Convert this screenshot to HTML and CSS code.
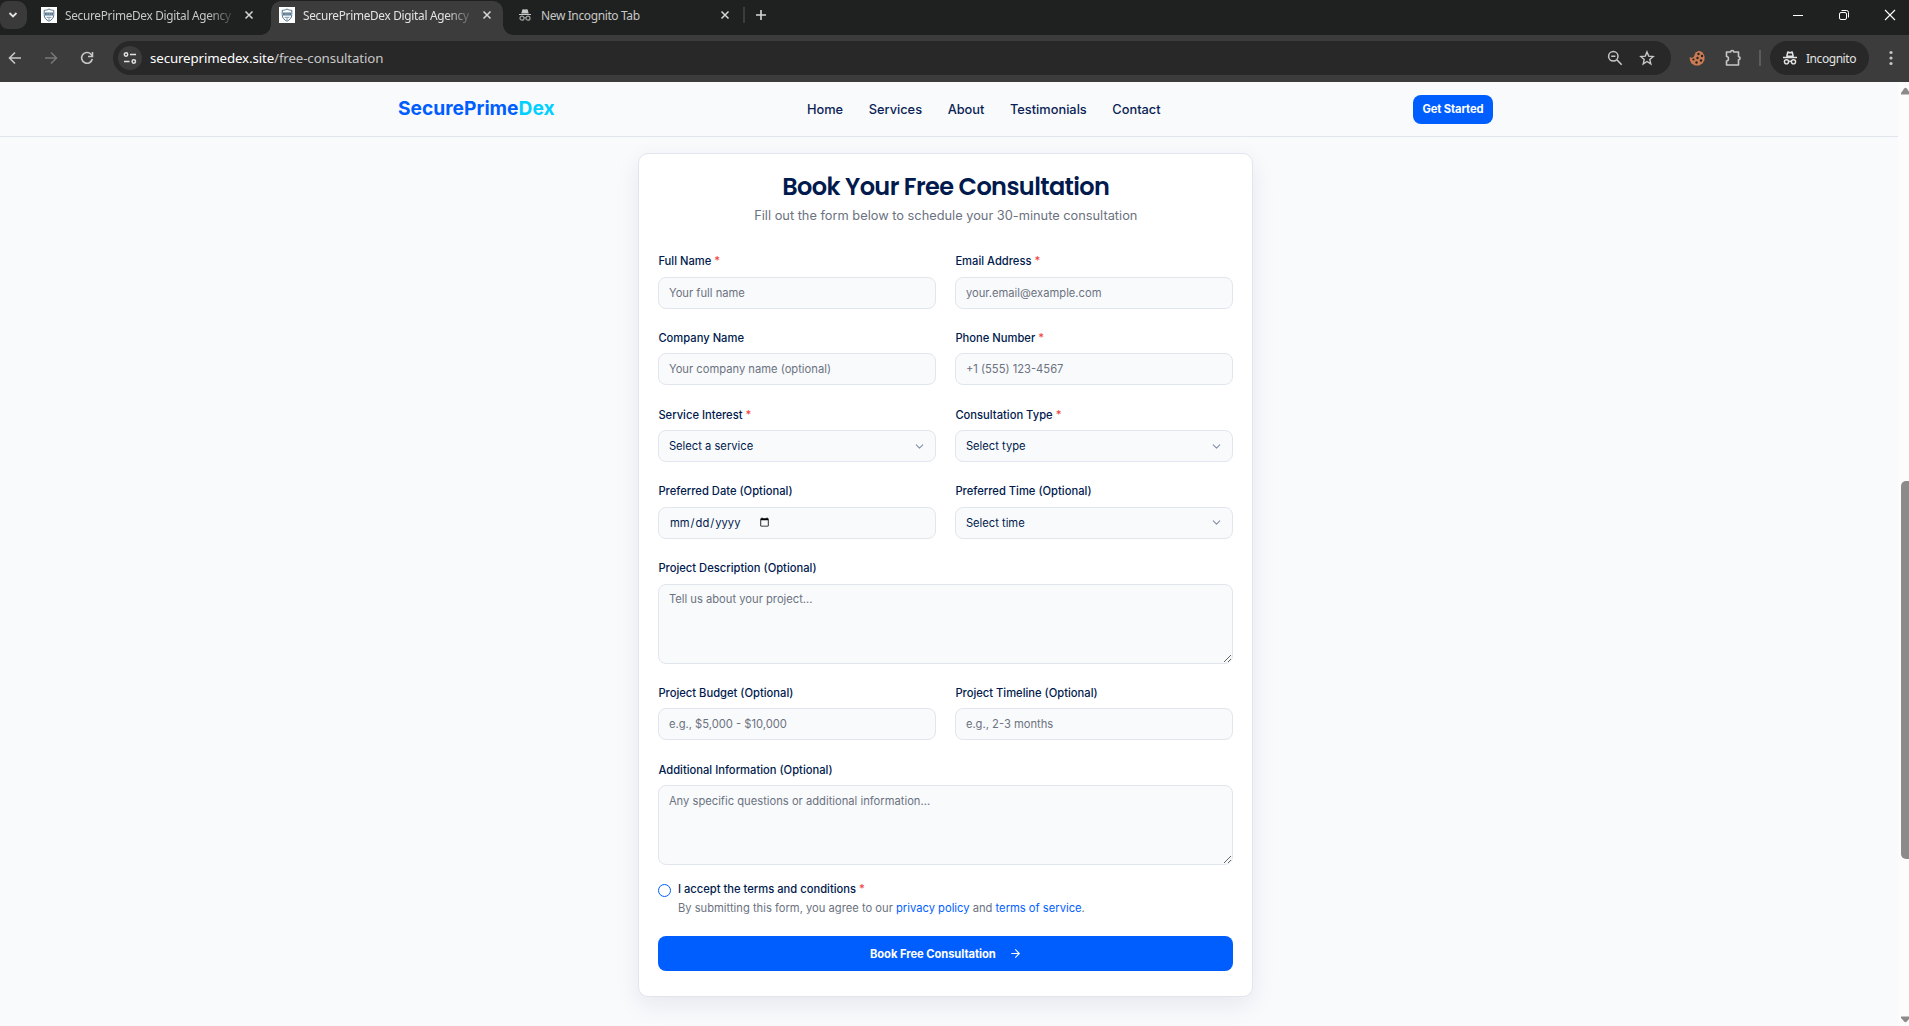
FILE: index.html
```html
<!DOCTYPE html>
<html lang="en">
<head>
<meta charset="utf-8">
<title>SecurePrimeDex Digital Agency</title>
<link rel="stylesheet" href="styles.css">
</head>
<body>
<svg class="defs" width="0" height="0">
  <symbol id="i-x" viewBox="0 0 10 10"><path d="M1.5 1.5l7 7M8.500 1.500l-7 7" fill="none" stroke="currentColor" stroke-width="1.500"/></symbol>
  <symbol id="i-shield" viewBox="0 0 16 16"><rect width="16" height="16" fill="#fff"/><path d="M8 2c-1.600 1-3 1.300-4.800 1.300v4.400C3.200 11 5.300 13 8 14.200 10.700 13 12.800 11 12.800 7.700V3.300C11 3.300 9.600 3 8 2z" fill="none" stroke="#54748c" stroke-width="1"/><path d="M4 5.500h8v3H4z" fill="#54748c"/><path d="M5.500 7h1.200M7.500 7h1.200M9.500 7h1.200" stroke="#cfd9e0" stroke-width=".8"/><path d="M5.500 10.300h5M7 12h2" stroke="#7b94a7" stroke-width="1"/></symbol>
  <symbol id="i-spy" viewBox="0 0 16 16"><path d="M4.800 6.200l1-4.200 2.200.7 2.200-.7 1 4.200z" fill="none" stroke="currentColor" stroke-width="1.500" stroke-linejoin="round"/><path d="M1 7.500h14" stroke="currentColor" stroke-width="1.500"/><circle cx="4.500" cy="11.800" r="2.100" fill="none" stroke="currentColor" stroke-width="1.400"/><circle cx="11.500" cy="11.800" r="2.100" fill="none" stroke="currentColor" stroke-width="1.400"/><path d="M6.600 11.600q1.400-1 2.800 0" fill="none" stroke="currentColor" stroke-width="1.300"/></symbol>
  <symbol id="i-chev" viewBox="0 0 24 24"><path d="m6 9 6 6 6-6" fill="none" stroke="currentColor" stroke-width="2" stroke-linecap="round" stroke-linejoin="round"/></symbol>
</svg>

<div class="chrome">
  <div class="tabstrip">
    <div class="tab-search"><svg width="10" height="8" viewBox="0 0 10 8"><path d="M1.500 2l3.500 3.500L8.500 2" fill="none" stroke="#e3e3e3" stroke-width="1.800"/></svg></div>
    <div class="tab tab-first"><svg width="16" height="16"><use href="#i-shield"/></svg><span class="tab-title">SecurePrimeDex Digital Agency</span><svg class="tab-x" width="10" height="10"><use href="#i-x"/></svg></div>
    <div class="tab tab-active"><svg width="16" height="16"><use href="#i-shield"/></svg><span class="tab-title">SecurePrimeDex Digital Agency</span><svg class="tab-x" width="10" height="10"><use href="#i-x"/></svg></div>
    <div class="tab tab-last"><svg class="spy-tab" width="14" height="14" viewBox="0 0 14 14"><path d="M3.300 5.500L4.300 1.800q.3-.8 1-.6l1.700.4 1.700-.4q.7-.2 1 .6l1 3.700z" fill="#c7c7c7"/><path d="M1 6.500h12" stroke="#c7c7c7" stroke-width="1"/><circle cx="4" cy="10.200" r="2" fill="none" stroke="#a0a0a0" stroke-width="1.200"/><circle cx="10" cy="10.200" r="2" fill="none" stroke="#a0a0a0" stroke-width="1.200"/><path d="M6 10q1-.7 2 0" fill="none" stroke="#a0a0a0"/></svg><span class="tab-title">New Incognito Tab</span><svg class="tab-x" width="10" height="10"><use href="#i-x"/></svg></div>
    <div class="tab-sep"></div>
    <svg class="plus" width="12" height="12" viewBox="0 0 12 12"><path d="M6 1v10M1 6h10" stroke="#d6d6d6" stroke-width="1.600"/></svg>
    <div class="win">
      <svg width="12" height="12" viewBox="0 0 12 12"><path d="M1 6.500h10" stroke="#fff"/></svg>
      <svg width="12" height="12" viewBox="0 0 12 12"><rect x="1.500" y="3.500" width="7" height="7" rx="1.500" fill="none" stroke="#fff"/><path d="M3.500 1.500h5a2 2 0 0 1 2 2v5" fill="none" stroke="#fff"/></svg>
      <svg width="12" height="12" viewBox="0 0 12 12"><path d="M1 1l10 10M11 1L1 11" stroke="#fff" stroke-width="1.100"/></svg>
    </div>
  </div>
  <div class="toolbar">
    <svg class="nav-ico" width="14" height="14" viewBox="0 0 14 14"><path d="M13 7H2M7 1.500L1.500 7 7 12.500" fill="none" stroke="#c7c7c7" stroke-width="1.600"/></svg>
    <svg class="nav-ico" width="14" height="14" viewBox="0 0 14 14"><path d="M1 7h11M7 1.500L12.500 7 7 12.500" fill="none" stroke="#777" stroke-width="1.600"/></svg>
    <svg class="nav-ico" width="14" height="14" viewBox="0 0 14 14"><path d="M12.300 8A5.400 5.400 0 1 1 11 3.200L12.500 5" fill="none" stroke="#c7c7c7" stroke-width="1.600"/><path d="M12.500 1v4.500H8" fill="none" stroke="#c7c7c7" stroke-width="1.600"/></svg>
    <div class="omnibox">
      <div class="site-info"><svg width="14" height="12" viewBox="0 0 14 12"><circle cx="3" cy="2.500" r="1.700" fill="none" stroke="#e3e3e3" stroke-width="1.500"/><path d="M7 2.500h6M1 9.500h5.500" stroke="#e3e3e3" stroke-width="1.500"/><circle cx="10.800" cy="9.500" r="1.700" fill="none" stroke="#e3e3e3" stroke-width="1.500"/></svg></div>
      <span class="url">secureprimedex.site<span class="url-path">/free-consultation</span></span>
      <svg class="zoom-ico" width="16" height="16" viewBox="0 0 16 16"><circle cx="6.300" cy="6.300" r="4.700" fill="none" stroke="#c7c7c7" stroke-width="1.500"/><path d="M9.800 9.800L14.700 14.700M4.200 6.300h4.200" stroke="#c7c7c7" stroke-width="1.600"/></svg>
      <svg width="16" height="16" viewBox="0 0 16 16"><path d="M8 1.900l1.700 4.200 4.500.4-3.400 3 1 4.400L8 11.500l-3.800 2.400 1-4.400-3.400-3 4.500-.4z" fill="none" stroke="#c7c7c7" stroke-width="1.400"/></svg>
    </div>
    <svg class="cookie" width="16" height="16" viewBox="0 0 16 16"><path d="M6.500 2.500L10 .7l3.500 1.600L15.500 6v4l-2 3.500L10 15.500H6L2.500 13.500.8 10V7L3 8l2-1.500z" fill="#c97b54"/><g fill="#2b211c"><circle cx="9.500" cy="4" r="1.200"/><circle cx="13" cy="6" r="1.200"/><circle cx="8.500" cy="8" r="1.200"/><circle cx="4.500" cy="9.500" r="1.100"/><circle cx="12" cy="10.500" r="1.200"/><circle cx="7.500" cy="12.500" r="1.200"/></g></svg>
    <svg class="puzzle" width="18" height="18" viewBox="0 0 18 18"><path d="M2.500 3h4.200a1.500 1.500 0 0 1 3 0h4.800v4.700a1.500 1.500 0 0 1 0 3.100V16h-12v-4c2.600 0 2.600-4.500 0-4.500z" fill="none" stroke="#c7c7c7" stroke-width="1.600" stroke-linejoin="round"/></svg>
    <div class="tool-sep"></div>
    <div class="incog"><svg width="16" height="16"><use href="#i-spy"/></svg><span>Incognito</span></div>
    <svg class="dots" width="4" height="16" viewBox="0 0 4 16"><g fill="#c7c7c7"><circle cx="2" cy="2.500" r="1.600"/><circle cx="2" cy="8" r="1.600"/><circle cx="2" cy="13.500" r="1.600"/></g></svg>
  </div>
</div>

<div class="viewport">
  <div class="page">
    <header class="site-header">
      <div class="header-inner">
        <div class="logo">SecurePrime<span>Dex</span></div>
        <nav class="menu"><a>Home</a><a>Services</a><a>About</a><a>Testimonials</a><a>Contact</a></nav>
        <button class="cta">Get Started</button>
      </div>
    </header>
    <main class="main">
      <form class="card">
        <h1>Book Your Free Consultation</h1>
        <p class="sub">Fill out the form below to schedule your 30-minute consultation</p>
        <div class="grid">
          <div class="field"><label>Full Name <i>*</i></label><input class="ctl" placeholder="Your full name"></div>
          <div class="field"><label>Email Address <i>*</i></label><input class="ctl" placeholder="your.email@example.com"></div>
          <div class="field"><label>Company Name</label><input class="ctl" placeholder="Your company name (optional)"></div>
          <div class="field"><label>Phone Number <i>*</i></label><input class="ctl" placeholder="+1 (555) 123-4567"></div>
          <div class="field"><label>Service Interest <i>*</i></label><div class="ctl select"><span>Select a service</span><svg width="13" height="13"><use href="#i-chev"/></svg></div></div>
          <div class="field"><label>Consultation Type <i>*</i></label><div class="ctl select"><span>Select type</span><svg width="13" height="13"><use href="#i-chev"/></svg></div></div>
          <div class="field"><label>Preferred Date (Optional)</label><input class="ctl date" type="date"></div>
          <div class="field"><label>Preferred Time (Optional)</label><div class="ctl select"><span>Select time</span><svg width="13" height="13"><use href="#i-chev"/></svg></div></div>
          <div class="field wide"><label>Project Description (Optional)</label><textarea class="ctl area" placeholder="Tell us about your project..."></textarea></div>
          <div class="field"><label>Project Budget (Optional)</label><input class="ctl" placeholder="e.g., $5,000 - $10,000"></div>
          <div class="field"><label>Project Timeline (Optional)</label><input class="ctl" placeholder="e.g., 2-3 months"></div>
          <div class="field wide"><label>Additional Information (Optional)</label><textarea class="ctl area" placeholder="Any specific questions or additional information..."></textarea></div>
        </div>
        <div class="terms">
          <span class="check"></span>
          <div><p class="accept">I accept the terms and conditions <i>*</i></p><p class="legal">By submitting this form, you agree to our <a>privacy policy</a> and <a>terms of service</a>.</p></div>
        </div>
        <button class="submit" type="button"><span>Book Free Consultation</span><svg width="13" height="13" viewBox="0 0 24 24"><path d="M5 12h14M12 5l7 7-7 7" fill="none" stroke="#fff" stroke-width="2" stroke-linecap="round" stroke-linejoin="round"/></svg></button>
      </form>
    </main>
  </div>
  <div class="scrollbar">
    <svg width="11" height="8" viewBox="0 0 11 8"><path d="M3 7.500V6L6.200 1.500Q7.500 0 8.800 1.500L12 6v1.500z" fill="#8b8b8b"/></svg>
    <div class="thumb"></div>
    <svg width="11" height="8" viewBox="0 0 11 8"><path d="M3 .5V2l3.200 3.500q1.300 1.500 2.600 0L12 2V.5z" fill="#8b8b8b"/></svg>
  </div>
</div>
</body>
</html>
```
FILE: styles.css
```css
* { box-sizing: border-box; }
body { margin: 0; height: 1026px; display: flex; flex-direction: column; overflow: hidden; font-family: Inter, sans-serif; background: #f9fafc; }
p, h1 { margin: 0; }
i { font-style: normal; color: #ef4444; }
svg { display: block; flex: none; }
.defs { position: absolute; }

/* browser frame */
.chrome { flex: none; height: 82px; background: #3c3c3c; font-family: "Noto Sans", sans-serif; }
.tabstrip { height: 35px; background: #1f2120; display: flex; align-items: stretch; font-size: 12px; color: #c7c7c7; }
.tab-search { width: 27px; height: 28px; margin-top: 1px; padding-right: 1px; background: #3a3a3a; border-radius: 8px 10px 10px 8px; display: flex; align-items: center; justify-content: center; }
.tab { display: flex; align-items: center; padding-bottom: 5px; }
.tab-first { width: 244px; padding: 0 17px 5px 14px; }
.tab-active { position: relative; width: 232px; margin-top: 1px; padding: 0 11px 6px 8px; background: #3c3c3c; color: #e3e3e3; border-radius: 10px 10px 0 0; }
.tab-active::before, .tab-active::after { content: ""; position: absolute; bottom: 0; width: 10px; height: 10px; }
.tab-active::before { left: -10px; background: radial-gradient(circle at 0 0, transparent 9.500px, #3c3c3c 10px); }
.tab-active::after { right: -10px; background: radial-gradient(circle at 100% 0, transparent 9.500px, #3c3c3c 10px); }
.tab-title { margin-left: 8px; white-space: nowrap; letter-spacing: -.38px; }
.tab-first .tab-title, .tab-active .tab-title { font-size: 11.800px; letter-spacing: -.28px; -webkit-mask-image: linear-gradient(90deg, #000 86%, transparent 104%); mask-image: linear-gradient(90deg, #000 86%, transparent 104%); }
.tab-x { margin-left: auto; color: #d6d6d6; }
.tab-last { width: 227px; padding: 0 0 5px 15px; }
.tab-last .tab-title { margin-left: 9px; }
.tab-sep { width: 2px; height: 16px; margin: 7px 0 0 13px; background: #3c3c3c; }
.plus { margin: 9px 0 0 10px; }
.win { margin-left: auto; display: flex; gap: 34px; padding: 9px 13px 0 0; }
.toolbar { height: 47px; display: flex; align-items: center; padding-bottom: 1px; }
.nav-ico { margin: 0 14px 0 8px; }
.nav-ico + .nav-ico { margin-left: 8px; }
.omnibox { width: 1558px; height: 34px; margin-left: 5px; border-radius: 17px; background: #282828; display: flex; align-items: center; padding: 0 16px 0 5px; }
.site-info { width: 24px; height: 24px; border-radius: 50%; background: #3c3c3c; display: flex; align-items: center; justify-content: center; }
.url { margin-left: 8px; font-size: 13.300px; letter-spacing: -.12px; color: #fff; }
.url-path { color: #c7c7c7; }
.zoom-ico { margin: 0 16px 0 auto; }
.cookie { margin-left: 18px; }
.puzzle { margin-left: 19px; }
.tool-sep { width: 2px; height: 16px; margin: 0 9px 0 17px; background: #5c5c5c; }
.incog { width: 99px; height: 34px; border-radius: 17px; background: #282828; display: flex; align-items: center; padding-left: 12px; gap: 8px; font-size: 12px; letter-spacing: -.45px; color: #e3e3e3; }
.dots { margin-left: 20px; }

/* page */
.viewport { flex: 1; display: flex; min-height: 0; }
.page { flex: 1; background: #f9fafc; }
.site-header { height: 55px; border-bottom: 1px solid #e1e5ed; }
.header-inner { width: 1095px; margin-left: 398px; height: 54px; display: flex; justify-content: space-between; align-items: center; }
.logo { font-size: 19.200px; font-weight: 700; color: #005eff; line-height: 26px; padding-bottom: 2px; }
.logo span { color: #00d0ff; }
.menu { display: flex; gap: 25.600px; font-size: 12.800px; font-weight: 500; color: #0a1f56; }
.cta { width: 80px; height: 29px; border: 0; border-radius: 8px; padding: 0; background: #005eff; color: #fff; font: 700 11.200px Inter, sans-serif; letter-spacing: -.12px; }
.main { padding: 16px 0 0 638.400px; }
.card { width: 614.400px; height: 843.500px; padding: 18px 18.600px 0 19px; border: 1px solid #e1e5ed; border-radius: 10px; background: #fff; box-shadow: 0 8px 25px rgba(0, 26, 77, .08); }
.card h1 { text-align: center; font-size: 24px; line-height: 30px; font-weight: 600; letter-spacing: -.6px; color: #001a4d; font-family: Poppins, Inter, sans-serif; }
.sub { text-align: center; margin-top: 4px; font-size: 12.800px; line-height: 20px; color: #6b7280; }
.grid { display: grid; grid-template-columns: 1fr 1fr; gap: 19.200px; margin-top: 25.060px; }
.wide { grid-column: 1 / -1; }
.field label { display: block; height: 19.200px; line-height: 21.600px; margin-bottom: 6.400px; font-size: 11.200px; font-weight: 500; color: #001a4d; }
.ctl { display: flex; align-items: center; width: 100%; height: 32px; margin: 0; padding: 0 9.500px; border: 1px solid #e1e5ed; border-radius: 8px; background: #f9fafc; font: 11.200px Inter, sans-serif; color: #001a4d; outline: 0; }
.ctl::placeholder { color: #6b7280; }
.select { justify-content: space-between; }
.select svg { color: #8490a8; }
.area { display: block; height: 80px; padding: 6.300px 9.500px; line-height: 16px; resize: vertical; }
.terms { display: flex; gap: 6.500px; margin-top: 14px; font-size: 11.200px; }
.check { flex: none; width: 13px; height: 13px; margin-top: 5px; border: 1px solid #005eff; border-radius: 50%; }
.accept { line-height: 20px; font-weight: 500; color: #001a4d; }
.legal { line-height: 18px; color: #6b7280; }
.legal a { color: #005eff; }
.submit { width: 100%; height: 35px; margin-top: 19px; border: 0; border-radius: 8px; background: #005eff; color: #fff; font: 700 11.200px Inter, sans-serif; letter-spacing: -.06px; display: flex; align-items: center; justify-content: center; gap: 13px; }
.scrollbar { width: 11px; background: #fcfcfc; display: flex; flex-direction: column; padding: 5px 0 2px; }
.thumb { width: 12px; height: 378px; margin: 386px 0 auto 3px; border-radius: 5px; background: #8b8b8b; }
```
